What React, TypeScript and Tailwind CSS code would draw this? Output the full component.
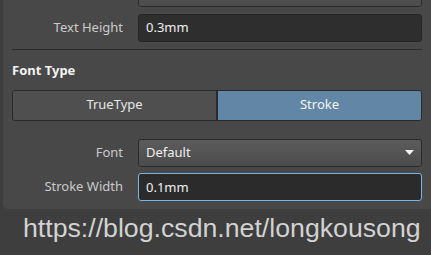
const ui = { fontFamily: '"Noto Sans", "Open Sans", sans-serif' };

function Label({ children }: { children: React.ReactNode }) {
  return <div className="w-[111px] shrink-0 text-right text-[13px] text-[#cacaca]">{children}</div>;
}

function Dropdown({ value }: { value?: string }) {
  return (
    <div className="flex h-[28px] flex-1 items-center justify-between rounded-[3px] border border-[#2a2a2a] bg-gradient-to-b from-[#5c5c5c] to-[#4b4b4b] pl-[7px] pr-[7px] text-[13px] text-[#f0f0f0]">
      <span>{value}</span>
      <svg width="9" height="5" viewBox="0 0 9 5">
        <path d="M0 0h9L4.5 5z" fill="#f2f2f2" />
      </svg>
    </div>
  );
}

export default function App() {
  return (
    <div className="relative h-[255px] w-[431px] overflow-hidden bg-[#3e3e3e]" style={ui}>
      <div className="ml-[3px] h-[230px] rounded-bl-[5px] bg-[#484848] pl-[9px] pr-[9px]">
        <div className="-mt-[21px] flex flex-col">
          {/* row scrolled mostly out of view */}
          <div className="flex items-center gap-[15px]">
            <Label>Autoposition</Label>
            <Dropdown />
          </div>
          <div className="mt-[7px] flex items-center gap-[15px]">
            <Label>Text Height</Label>
            <div className="flex h-[28px] flex-1 items-center rounded-[3px] border border-[#262626] bg-[#2e2e2e] pl-[7px] text-[13px] text-[#f0f0f0]">
              0.3mm
            </div>
          </div>
          <div className="mt-[7px] h-px bg-[#2c2c2c]" />
          <div className="mt-[11px] text-[13px] font-bold text-[#f2f2f2]">Font Type</div>
          <div className="mt-[9px] flex h-[31px] overflow-hidden rounded-[3px] border border-[#2a2a2a] text-[13px]">
            <div className="flex flex-1 items-center justify-center bg-[#4f4f4f] text-[#e6e6e6]">TrueType</div>
            <div className="w-[2px] bg-[#2a2a2a]" />
            <div className="flex flex-1 items-center justify-center bg-[#6287a6] text-[#f4f4f4]">Stroke</div>
          </div>
          <div className="mt-[18px] flex items-center gap-[15px]">
            <Label>Font</Label>
            <Dropdown value="Default" />
          </div>
          <div className="mt-[6px] flex items-center gap-[15px]">
            <Label>Stroke Width</Label>
            <div className="flex h-[28px] flex-1 items-center rounded-[3px] border border-[#7fb2e5] bg-[#2b2b2b] pl-[7px] pt-[2px] text-[13px] text-[#f0f0f0]">
              0.1mm
            </div>
          </div>
        </div>
      </div>
      {/* blog watermark */}
      <div
        className="absolute left-[23px] top-[215px] whitespace-nowrap text-[26.7px] leading-[27px] text-[#d2d2d2]"
        style={{ fontFamily: '"Liberation Sans", Arial, sans-serif' }}
      >
        https://blog.csdn.net/longkousong
      </div>
    </div>
  );
}
